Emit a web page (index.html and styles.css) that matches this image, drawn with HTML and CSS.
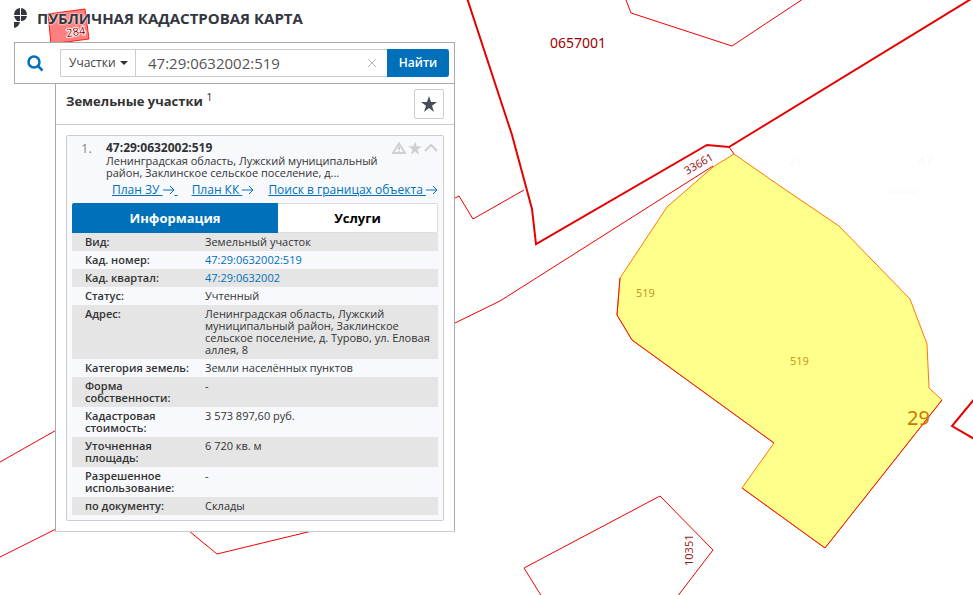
FILE: index.html
```html
<!DOCTYPE html>
<html lang="ru">
<head>
<meta charset="utf-8">
<title>Публичная кадастровая карта</title>
<link rel="stylesheet" href="styles.css">
</head>
<body>
<svg class="map" viewBox="0 0 973 595" preserveAspectRatio="xMidYMid slice" role="img" aria-label="Карта">
  <polygon class="building" points="48,14 85,9 89,39 51,44"/>
  <text class="building-label" x="67" y="37" transform="rotate(-8 67 37)">284</text>
  <g class="parcels">
    <polyline points="626,0 631,13 732,46 815,-9"/>
    <polyline points="455,198 459,196 473,219 524,190"/>
    <polyline points="455,323 500,301 713,166"/>
    <polyline points="729,147 734,154"/>
    <polyline points="0,462 60,428"/>
    <polyline points="0,557 60,527"/>
    <polyline points="189,531 217,554 312,531"/>
    <polyline points="542,597 524,568 660,496 713,550 677,597"/>
  </g>
  <g class="quarters">
    <polyline points="467,-2 512,135 532,209 536,244 707,145 729,147 976,-4"/>
    <polyline points="976,397 952,426 976,440"/>
  </g>
  <polygon class="selected" points="734,154 780,186 839,226 910,299 927,344 929,388 942,400 825,548 742,488 774,443 632,340 617,315 620,278 667,207 713,167"/>
  <polyline class="selected-edge" points="942,400 825,548 742,488"/>
  <polyline class="selected-edge" points="774,443 632,340 617,315 620,278"/>
  <text class="quarter-label" x="550" y="48">0657001</text>
  <text class="parcel-label" x="687" y="175" transform="rotate(-30 687 175)">33661</text>
  <text class="parcel-label" x="693" y="566" transform="rotate(-90 693 566)">10351</text>
  <text class="selected-label" x="636" y="297">519</text>
  <text class="selected-label" x="790" y="365">519</text>
  <text class="district-label" x="907" y="425">29</text>
  <g class="faint">
    <text x="789" y="165" font-size="10">29</text>
    <text x="918" y="165" font-size="13">47</text>
    <text x="888" y="194" font-size="7">0632002</text>
  </g>
</svg>

<div class="app">
  <header class="brand">
    <svg class="logo" viewBox="0 0 14 20" aria-hidden="true">
      <path d="M6 0V7H0Q0 1 6 0ZM7 0Q13 1 13 7H7ZM0 8H6V13H3Q1 11 0 8ZM7 8H13Q12 13 7 13ZM0 14H6Q5 19 0 20Z"/>
    </svg>
    <h1>ПУБЛИЧНАЯ КАДАСТРОВАЯ КАРТА</h1>
  </header>

  <main class="panel">
    <form class="search">
      <svg class="search-icon" viewBox="0 0 17 17" aria-hidden="true">
        <circle cx="7" cy="7" r="5.5"/><path d="M11 11l4.500 4.500"/>
      </svg>
      <div class="fields">
        <span class="picker">
          <select aria-label="Тип объекта"><option>Участки</option></select>
          <svg viewBox="0 0 8 4" aria-hidden="true"><path d="M0 0h8L4 4z"/></svg>
        </span>
        <input class="query" type="text" aria-label="Кадастровый номер" value="47:29:0632002:519">
        <button class="clear" type="button" aria-label="Очистить"><svg viewBox="0 0 10 10"><path d="M1 1l8 8M9 1l-8 8"/></svg></button>
        <button class="find" type="button">Найти</button>
      </div>
    </form>

    <section class="results">
      <div class="results-head">
        <h2>Земельные участки <sup>1</sup></h2>
        <button class="favorite" type="button" aria-label="Избранное"><svg viewBox="0 0 16 16"><path d="M8 0l2 6h6l-5 3.700 2 6.300-5-4-5 4 2-6.300L0 6h6z"/></svg></button>
      </div>

      <article class="card">
        <div class="card-head">
          <span class="number">1.</span>
          <div class="summary">
            <h3>47:29:0632002:519</h3>
            <p>Ленинградская область, Лужский муниципальный район, Заклинское сельское поселение, д...</p>
          </div>
          <div class="tools">
            <button type="button" aria-label="Сообщить об ошибке"><svg viewBox="0 0 14 12"><path class="line" d="M7 1.500L13 11H1z"/><path class="line" d="M7 4.500v3.500M7 9v1.500"/></svg></button>
            <button type="button" aria-label="В избранное"><svg viewBox="1 1 14 14"><path d="M8 0l2 6h6l-5 3.700 2 6.300-5-4-5 4 2-6.300L0 6h6z"/></svg></button>
            <button type="button" aria-label="Свернуть"><svg viewBox="0 0 14 12"><path class="line" d="M1 9l6-6 6 6"/></svg></button>
          </div>
        </div>
        <nav class="links">
          <a href="#">План ЗУ <svg viewBox="0 0 12 10"><path d="M0 5h11M7 1l4 4-4 4"/></svg>&nbsp;</a>
          <a href="#">План КК <svg viewBox="0 0 12 10"><path d="M0 5h11M7 1l4 4-4 4"/></svg></a>
          <a href="#">Поиск в границах объекта <svg viewBox="0 0 12 10"><path d="M0 5h11M7 1l4 4-4 4"/></svg></a>
        </nav>
        <div class="tabs">
          <button class="tab active" type="button">Информация</button>
          <button class="tab" type="button">Услуги</button>
        </div>
        <table class="info">
          <tbody>
            <tr><th scope="row">Вид:</th><td>Земельный участок</td></tr>
            <tr><th scope="row">Кад. номер:</th><td><a href="#">47:29:0632002:519</a></td></tr>
            <tr><th scope="row">Кад. квартал:</th><td><a href="#">47:29:0632002</a></td></tr>
            <tr><th scope="row">Статус:</th><td>Учтенный</td></tr>
            <tr><th scope="row">Адрес:</th><td>Ленинградская область, Лужский муниципальный район, Заклинское сельское поселение, д. Турово, ул. Еловая аллея, 8</td></tr>
            <tr><th scope="row">Категория земель:</th><td>Земли населённых пунктов</td></tr>
            <tr><th scope="row">Форма собственности:</th><td>-</td></tr>
            <tr><th scope="row">Кадастровая стоимость:</th><td>3 573 897,60 руб.</td></tr>
            <tr><th scope="row">Уточненная площадь:</th><td>6 720 кв. м</td></tr>
            <tr><th scope="row">Разрешенное использование:</th><td>-</td></tr>
            <tr><th scope="row">по документу:</th><td>Склады</td></tr>
          </tbody>
        </table>
      </article>
    </section>
  </main>
</div>
</body>
</html>
```

FILE: styles.css
```css
* { box-sizing: border-box; }
body {
  margin: 0;
  min-height: 100vh;
  overflow: hidden;
  background: #fff;
  color: #333;
  font: 11px/12px "Open Sans", "Noto Sans", sans-serif;
}
h1, h2, h3, p { margin: 0; }
button, input, select { margin: 0; padding: 0; font: inherit; color: inherit; border: 0; background: none; }
a { color: #0070ba; text-decoration: none; }

/* Map canvas */
.map { position: absolute; inset: 0; width: 100%; height: 100%; font-family: "Noto Sans", sans-serif; }
.parcels { fill: none; stroke: #f00000; stroke-width: 1; }
.quarters { fill: none; stroke: #e60000; stroke-width: 2; }
.selected { fill: #ffff8c; stroke: #ff7800; }
.selected-edge { fill: none; stroke: #f01414; }
.building { fill: #ff7f7f; stroke: #ff1a1a; }
.building-label { font: 11px "Open Sans", sans-serif; fill: #900; stroke: #fff; stroke-width: 2px; paint-order: stroke; }
.quarter-label { font-size: 14px; fill: #9b0000; }
.parcel-label { font-size: 11px; fill: #9b1c1c; }
.selected-label { font-size: 11px; fill: #c49a20; }
.district-label { font-size: 20px; fill: #c87800; }
.faint { fill: #f9f9f9; }

/* Floating panel */
.app { position: relative; width: 100%; max-width: 455px; padding: 8px 0 0 14px; }
.brand { display: flex; align-items: center; gap: 9px; height: 20px; margin-bottom: 14px; }
.logo { width: 14px; height: 20px; fill: #34363f; }
.brand h1 { font-size: 15px; line-height: 20px; color: #34363f; white-space: nowrap; text-shadow: 0 0 2px #fff, 0 0 2px #fff; }
.search { display: flex; align-items: center; padding: 6px 5px 6px 12px; background: #fff; border: 1px solid #aaa; }
.search-icon { width: 17px; height: 17px; margin-right: 16px; fill: none; stroke: #0070ba; stroke-width: 2.5; }
.fields { flex: 1; display: flex; height: 28px; border: 1px solid #ccc; border-right: 0; border-radius: 2px; }
.picker { display: flex; align-items: center; gap: 4px; padding: 0 7px 0 8px; border-right: 1px solid #ccc; }
.picker select { appearance: none; font-size: 12px; line-height: 18px; color: #444; }
.picker svg { width: 8px; height: 4px; fill: #333; }
.query { flex: 1; min-width: 0; padding-left: 12px; font-size: 15px; color: #555; }
.clear { width: 30px; display: flex; align-items: center; justify-content: center; }
.clear svg { width: 10px; height: 10px; stroke: #bbb; stroke-width: 1; }
.find { width: 62px; height: 28px; margin-top: -1px; border-radius: 0 3px 3px 0; background: #0070ba; color: #fff; font-size: 12px; font-weight: 600; }

.results { margin: -1px 0 0 41px; padding-bottom: 10px; background: #fff; border: 1px solid #aaa; border-bottom-color: #ccc; }
.results-head { display: flex; align-items: center; justify-content: space-between; height: 41px; padding: 0 10px; border-bottom: 1px solid #ccc; }
.results-head h2 { font-size: 13px; line-height: 18px; padding-bottom: 6px; }
.results-head sup { font-size: 11px; font-weight: 400; line-height: 0; }
.favorite { display: flex; align-items: center; justify-content: center; width: 30px; height: 30px; border: 1px solid #ccc; border-radius: 2px; }
.favorite svg { width: 16px; height: 16px; fill: #464d59; }

.card { margin: 10px 10px 0; padding: 5px; background: #f7f9fc; border: 1px solid #ccc; border-radius: 2px; }
.card-head { display: flex; }
.number { width: 34px; padding-left: 9px; font-size: 13px; line-height: 14px; color: #888; }
.summary { flex: 1; }
.summary h3 { font-size: 12px; line-height: 14px; }
.tools { display: flex; gap: 2px; height: 14px; align-items: center; }
.tools button { display: flex; }
.tools svg { width: 14px; height: 12px; fill: #d0d0d0; }
.tools .line { fill: none; stroke: #d0d0d0; stroke-width: 2; }
.links { display: flex; justify-content: flex-end; gap: 14px; height: 24px; padding-top: 3px; }
.links a { font-size: 12px; line-height: 16px; text-decoration: underline; white-space: nowrap; }
.links svg { width: 12px; height: 10px; vertical-align: -1px; fill: none; stroke: #0070ba; }
.tabs { display: grid; grid-template-columns: 206px 1fr; height: 30px; }
.tab { border: 1px solid #ddd; border-left: 0; border-radius: 0 2px 2px 0; background: #fff; color: #000; font-size: 13px; font-weight: 700; }
.tab.active { border: 0; border-radius: 2px 0 0 0; background: #0070ba; color: #fff; }
.info { width: 100%; border-collapse: collapse; table-layout: fixed; }
.info th, .info td { padding: 3px 0; text-align: left; vertical-align: top; }
.info th { width: 133px; padding: 3px 8px 3px 13px; font-weight: 600; }
.info tr:nth-child(odd) { background: #e5e5e5; }
```
